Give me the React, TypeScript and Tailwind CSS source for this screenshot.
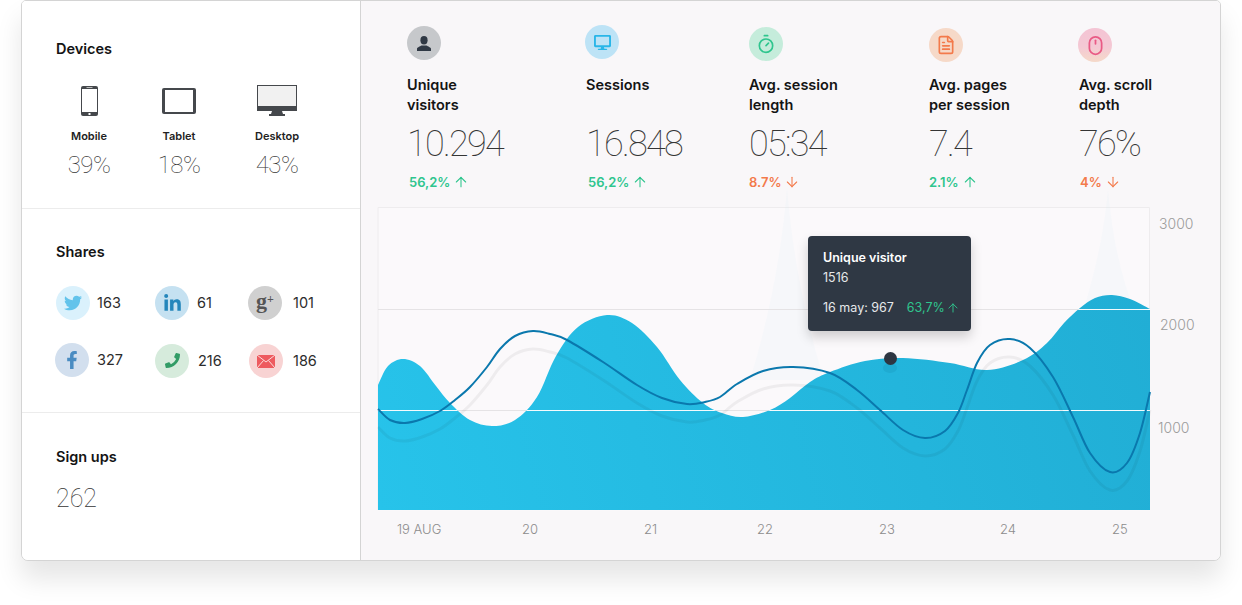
import React from "react";
import { FaTwitter, FaLinkedinIn, FaFacebookF, FaPhoneAlt, FaDesktop } from "react-icons/fa";
import { Timer, FileText, Mouse, ArrowUp, ArrowDown } from "lucide-react";

type P = [number, number];
function smooth(pts: P[]): string {
  let d = `M${pts[0][0]} ${pts[0][1]}`;
  for (let i = 0; i < pts.length - 1; i++) {
    const p0 = pts[i - 1] || pts[i];
    const p1 = pts[i];
    const p2 = pts[i + 1];
    const p3 = pts[i + 2] || p2;
    const c1x = p1[0] + (p2[0] - p0[0]) / 6;
    const c1y = p1[1] + (p2[1] - p0[1]) / 6;
    const c2x = p2[0] - (p3[0] - p1[0]) / 6;
    const c2y = p2[1] - (p3[1] - p1[1]) / 6;
    d += ` C${c1x.toFixed(1)} ${c1y.toFixed(1)} ${c2x.toFixed(1)} ${c2y.toFixed(1)} ${p2[0]} ${p2[1]}`;
  }
  return d;
}

const areaPts: P[] = [
  [378, 385], [388, 366], [403, 359], [420, 366], [436, 386], [450, 403], [470, 420], [492, 426], [515, 420], [537, 397],
  [556, 356], [578, 327], [607, 315], [632, 323], [657, 347], [680, 380], [703, 403], [722, 413], [743, 417], [770, 410],
  [790, 398], [810, 382], [830, 372], [865, 361], [903, 358], [950, 363], [987, 370], [1023, 360], [1047, 343], [1064, 323],
  [1080, 308], [1095, 298], [1112, 295], [1130, 299], [1150, 309],
];
const linePts: P[] = [
  [378, 409], [390, 420], [405, 423], [422, 419], [440, 411], [455, 400], [470, 387], [487, 367], [500, 349], [515, 336], [533, 331], [550, 334], [567, 340], [603, 362],
  [637, 385], [662, 398], [687, 404], [705, 402], [720, 397], [737, 384], [763, 371], [793, 367], [830, 373], [857, 390],
  [880, 410], [903, 430], [925, 438], [945, 431], [958, 413], [967, 390], [977, 363], [990, 345], [1010, 339], [1030, 348], [1053, 377],
  [1073, 417], [1090, 453], [1110, 472], [1127, 463], [1140, 433], [1150, 392],
];
const linePath = smooth(linePts);
const areaPath = smooth(areaPts) + " L1150 510 L378 510 Z";

const THIN = "[font-family:Roboto,sans-serif] font-thin opacity-[0.99]";

function Title({ children }: { children: React.ReactNode }) {
  return <h3 className="text-[14.5px] leading-5 font-semibold text-[#141414]">{children}</h3>;
}

function Phone() {
  return (
    <svg width="17" height="30" viewBox="0 0 17 30">
      <rect width="17" height="30" rx="2" fill="#45484c" />
      <rect x="1" y="3" width="15" height="23" fill="#fff" />
      <rect x="5.5" y="1" width="6" height="1" fill="#bbb" />
      <rect x="7.5" y="27" width="2" height="2" fill="#fff" />
    </svg>
  );
}
function Tablet() {
  return (
    <svg width="34" height="26" viewBox="0 0 34 26">
      <rect width="34" height="26" rx="2" fill="#45484c" />
      <rect x="3" y="2" width="28" height="22" fill="#fff" />
    </svg>
  );
}
function Monitor() {
  return (
    <svg width="40" height="31" viewBox="0 0 40 31">
      <rect width="40" height="26" fill="#45484c" />
      <rect x="1" y="1" width="38" height="20" fill="#f1f1f1" />
      <path d="M15 26h10l1 3h2v2H12v-2h2z" fill="#45484c" />
    </svg>
  );
}
function UserBust() {
  return (
    <svg width="14" height="15" viewBox="0 0 14 15">
      <ellipse cx="7" cy="4.2" rx="3.6" ry="4.2" fill="#2f3844" />
      <path d="M0 15v-2.2c0-1.6 3-2.4 4.6-3.4h4.8c1.6 1 4.6 1.8 4.6 3.4V15z" fill="#2f3844" />
    </svg>
  );
}
function Mail() {
  return (
    <svg width="18" height="13" viewBox="0 0 18 13">
      <rect width="18" height="13" fill="#ee5a5f" />
      <path d="M0 0l9 7 9-7M0 13l6.5-7.5M18 13l-6.5-7.5" fill="none" stroke="#fbdcdc" strokeWidth="1" />
    </svg>
  );
}

function Device({ icon, label, value, cls }: { icon: React.ReactNode; label: string; value: string; cls: string }) {
  return (
    <div className={`flex flex-col items-center ${cls}`}>
      <div className="h-[31px] flex items-center">{icon}</div>
      <div className="mt-[13px] text-[11px] leading-[14px] font-semibold text-[#222]">{label}</div>
      <div className={`mt-[9px] text-[24px] leading-[26px] tracking-[-0.6px] text-[#333] ${THIN}`}>{value}</div>
    </div>
  );
}

function Share({ bg, icon, count, cls, gap }: { bg: string; icon: React.ReactNode; count: string; cls: string; gap: string }) {
  return (
    <div className={`flex items-center ${cls}`}>
      <div className={`w-[34px] h-[34px] rounded-full flex items-center justify-center ${bg}`}>{icon}</div>
      <span className={`text-[14.5px] text-[#2c2c2c] ${gap}`}>{count}</span>
    </div>
  );
}

const stats = [
  { bg: "bg-[#c6c8cb]", icon: <UserBust />, title: ["Unique", "visitors"], value: "10.294", delta: "56,2%", up: true, mt: "mt-[25px]", h: "mb-[15px]", ml: "ml-[2px]" },
  { bg: "bg-[#bde3f6] -ml-px", icon: <FaDesktop className="text-[17px] text-[#29b6e8]" />, title: ["Sessions", "\u00a0"], value: "16.848", delta: "56,2%", up: true, mt: "mt-[24px]", h: "mb-[16px]", ml: "ml-[2px]" },
  { bg: "bg-[#c5ecdb]", icon: <Timer size={20} strokeWidth={2} className="text-[#2fc58e]" />, title: ["Avg. session", "length"], value: "05:34", delta: "8.7%", up: false, mt: "mt-[26px]", h: "mb-[14px]", ml: "" },
  { bg: "bg-[#f6d9c8]", icon: <FileText size={20} strokeWidth={2} className="text-[#f37a4b]" />, title: ["Avg. pages", "per session"], value: "7.4", delta: "2.1%", up: true, mt: "mt-[27px]", h: "mb-[13px]", ml: "" },
  { bg: "bg-[linear-gradient(180deg,#f4c4d4_0%,#f4c8d4_55%,#f5d9c9_100%)] -ml-px", icon: <Mouse size={21} strokeWidth={2} className="text-[#e95a85]" />, title: ["Avg. scroll", "depth"], value: "76%", delta: "4%", up: false, mt: "mt-[27px]", h: "mb-[13px]", ml: "ml-[1px]" },
];

export default function App() {
  return (
    <div className="w-[1242px] h-[605px] bg-white overflow-hidden pl-[21px]" style={{ fontFamily: '"Inter", "Open Sans", sans-serif' }}>
      <div className="w-[1200px] h-[561px] flex rounded-b-[7px] rounded-t-[5px] border border-[#d4d4d4] bg-white shadow-[0_18px_26px_rgba(0,0,0,0.1)] overflow-hidden">
        <aside className="w-[339px] shrink-0 border-r border-[#d4d4d4] bg-white flex flex-col">
          <section className="h-[208px] border-b border-[#ececec] pl-[34px] pt-[38px]">
            <Title>Devices</Title>
            <div className="flex mt-[26px]">
              <Device icon={<Phone />} label="Mobile" value="39%" cls="w-[46px] ml-[10px]" />
              <Device icon={<Tablet />} label="Tablet" value="18%" cls="w-[46px] ml-[44px]" />
              <Device icon={<Monitor />} label="Desktop" value="43%" cls="w-[46px] ml-[52px]" />
            </div>
          </section>
          <section className="h-[204px] border-b border-[#ececec] pl-[34px] pt-[33px]">
            <Title>Shares</Title>
            <div className="grid grid-cols-[99px_93px_1fr] mt-[24px]">
              <Share bg="bg-[#daf1fc]" icon={<FaTwitter className="text-[18px] text-[#62c3eb]" />} count="163" cls="" gap="ml-[7px]" />
              <Share bg="bg-[#c5e1f1]" icon={<FaLinkedinIn className="text-[19px] text-[#2486bb]" />} count="61" cls="" gap="ml-[8px]" />
              <Share bg="bg-[#d0d0d0]" icon={<span className="text-[22px] leading-none font-bold text-[#555] mt-[-5px] [font-family:'Liberation_Serif',serif]">g<span className="text-[12px] align-[5px]">+</span></span>} count="101" cls="" gap="ml-[11px]" />
              <Share bg="bg-[#d2dfee]" icon={<FaFacebookF className="text-[18px] text-[#4a8cc2]" />} count="327" cls="mt-[21px] ml-[-1px]" gap="ml-[8px]" />
              <Share bg="bg-[#d6ebdc]" icon={<FaPhoneAlt className="text-[15px] text-[#329c66] -scale-x-100" />} count="216" cls="mt-[23px]" gap="ml-[9px]" />
              <Share bg="bg-[#f8d3d3]" icon={<Mail />} count="186" cls="mt-[24px] ml-[1px]" gap="ml-[10px]" />
            </div>
          </section>
          <section className="pl-[34px] pt-[34px]">
            <Title>Sign ups</Title>
            <div className={`mt-[17px] text-[25px] leading-[30px] text-[#333] ${THIN}`}>262</div>
          </section>
        </aside>
        <main className="flex-1 bg-[#f9f7f9] flex flex-col min-w-0">
          <div className="h-[206px] grid grid-cols-[179px_163px_180px_150px_1fr] pl-[46px]">
            {stats.map((s) => (
              <div key={s.value} className={s.mt}>
                <div className={`w-[34px] h-[34px] rounded-full flex items-center justify-center ${s.bg} ${s.h}`}>{s.icon}</div>
                <Title>
                  {s.title[0]}
                  <br />
                  {s.title[1]}
                </Title>
                <div className={`mt-[8px] text-[36px] leading-[42px] tracking-[-1.7px] text-[#333] ${THIN}`}>{s.value}</div>
                <div className={`mt-[7px] flex items-center gap-[3px] text-[13px] leading-[20px] font-semibold ${s.ml} ${s.up ? "text-[#2fc58e]" : "text-[#f37a4b]"}`}>
                  {s.delta}
                  {s.up ? <ArrowUp size={16} strokeWidth={1.6} /> : <ArrowDown size={16} strokeWidth={1.6} />}
                </div>
              </div>
            ))}
          </div>
          <div className="flex pl-[17px]">
            <div className="relative w-[772px] h-[303px] shrink-0">
              <svg width="772" height="303" viewBox="378 207 772 303" className="block overflow-visible">
                <defs>
                  <linearGradient id="area" x1="378" y1="510" x2="1150" y2="300" gradientUnits="userSpaceOnUse">
                    <stop offset="0" stopColor="#27c3ea" />
                    <stop offset="1" stopColor="#21aed5" />
                  </linearGradient>
                  <clipPath id="areaClip">
                    <path d={areaPath} />
                  </clipPath>
                </defs>
                <rect x="378" y="207.5" width="772" height="303" fill="#fbf9fb" />
                <path d="M378 510V207.5H1149.5V510" fill="none" stroke="#eeecee" />
                <path d="M787 188C781 260 768 320 750 380H824C806 320 793 260 787 188Z" fill="#cfe8f4" opacity="0.1" />
                <path d="M1108 190C1103 240 1095 270 1085 305H1132C1120 270 1113 240 1108 190Z" fill="#cfe8f4" opacity="0.1" />
                <path d="M378 309.5H1150M378 410.5H1150" stroke="#e5e3e5" />
                <path d={areaPath} fill="url(#area)" />
                <g clipPath="url(#areaClip)">
                  <path d="M378 309.5H1150M378 410.5H1150" stroke="#f4fbfd" />
                </g>
                <path d={linePath} transform="translate(0 18)" fill="none" stroke="#000" strokeOpacity="0.05" strokeWidth="3" />
                <path d={linePath} fill="none" stroke="#0a78ad" strokeWidth="2" />
                <ellipse cx="890" cy="368" rx="7" ry="5" fill="#0d6f96" opacity="0.15" />
                <circle cx="890.5" cy="358.5" r="6.5" fill="#2d3642" />
              </svg>
              <div className="absolute left-[430px] top-[29px] w-[163px] h-[95px] rounded-[4px] bg-[#2f3844] shadow-[0_6px_12px_rgba(0,0,0,0.18)] pl-[15px] pt-[12px] text-[12.5px] text-[#e6e8ea]">
                <div className="leading-5 font-semibold text-white">Unique visitor</div>
                <div className="leading-5">1516</div>
                <div className="mt-[10px] leading-5 flex items-center">
                  <span>16 may: 967</span>
                  <span className="ml-[13px] text-[#2fc58e]">63,7%</span>
                  <ArrowUp size={14} strokeWidth={1.6} className="ml-[1px] text-[#2fc58e]" />
                </div>
              </div>
            </div>
            <div className="flex flex-col text-[14px] leading-5 text-[#9b9b9b] font-light">
              <span className="ml-[9px] mt-[7px]">3000</span>
              <span className="ml-[10px] mt-[81px]">2000</span>
              <span className="ml-[8px] mt-[83px]">1000</span>
            </div>
          </div>
          <div className="flex pl-[36px] mt-[9px] text-[13px] leading-[20px] text-[#8c8c8c] font-light">
            <span className="w-[125px]">19 AUG</span>
            <span className="w-[122px]">20</span>
            <span className="w-[113px]">21</span>
            <span className="w-[122px]">22</span>
            <span className="w-[121px]">23</span>
            <span className="w-[112px]">24</span>
            <span>25</span>
          </div>
        </main>
      </div>
    </div>
  );
}
